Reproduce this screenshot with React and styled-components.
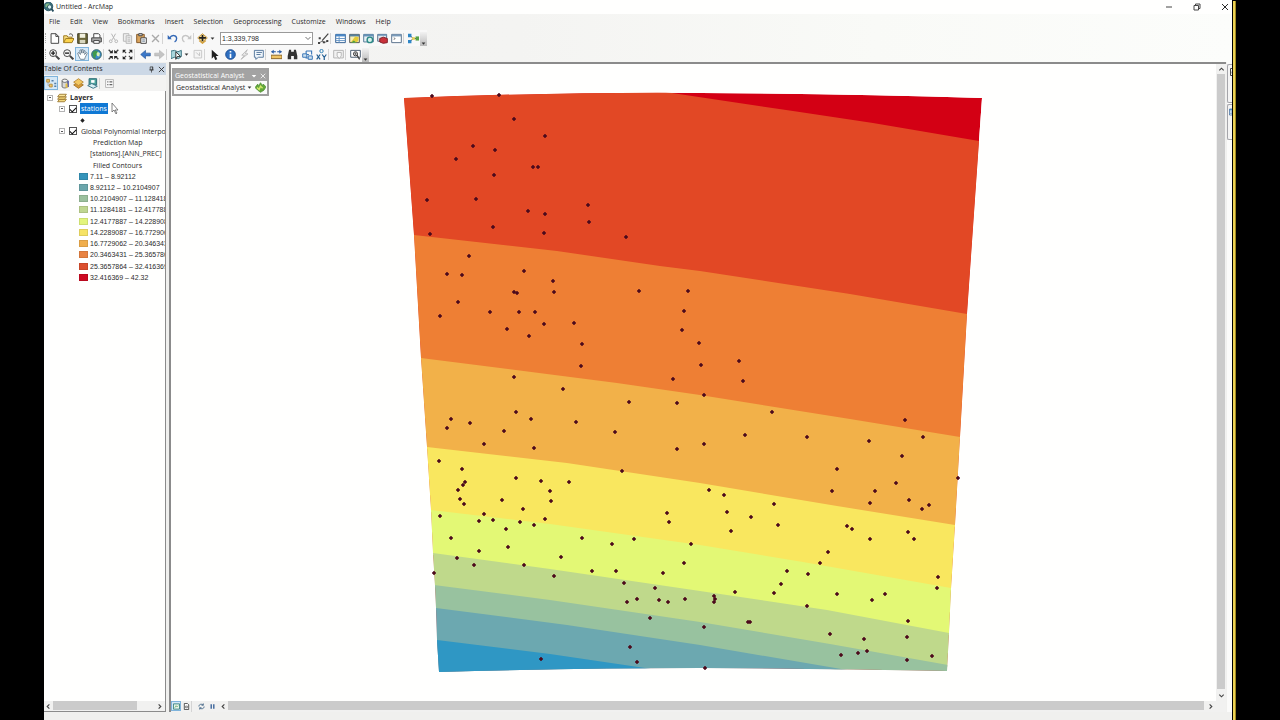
import React from 'react';
import styled, { createGlobalStyle, css } from 'styled-components';

const UI_FONT = '"Open Sans", "Noto Sans", sans-serif';
const NARROW_FONT = '"Liberation Sans", Arial, sans-serif';

const GlobalStyle = createGlobalStyle`
  * { box-sizing: border-box; }
  body { margin: 0; background: #000; font-family: ${UI_FONT}; font-size: 7px; color: #2b2b2b; }
  button, select, input { font: inherit; color: inherit; margin: 0; padding: 0; }
`;

const Screen = styled.div`
  display: flex;
  justify-content: space-between;
  height: 100vh;
  padding: 0 44px;
  background: #000;
  overflow: hidden;
`;

const AppWindow = styled.main`
  display: flex;
  flex: 1;
  flex-direction: column;
  min-width: 0;
  background: #f0f0ee;
`;

const DesktopEdge = styled.div`
  width: 3px;
  margin: 1px 0 0 1px;
  background: #ecd355;
  border-right: 1px solid #a48a22;
`;

const TitleBar = styled.header`
  display: flex;
  align-items: center;
  height: 14px;
  gap: 2px;
  background: #fffffe;
`;

const Title = styled.h1`
  flex: 1;
  margin: 0;
  font-size: 7px;
  font-weight: 400;
  line-height: 14px;
`;

const WindowButtons = styled.div`
  display: flex;
  gap: 16px;
  padding-right: 1px;
`;

const PlainButton = styled.button`
  display: grid;
  place-items: center;
  flex: none;
  width: ${(p) => p.$w || 12}px;
  height: ${(p) => p.$h || 12}px;
  border: 0;
  background: none;
`;

const Bars = styled.div`
  background: linear-gradient(90deg, #f2f2f1 0%, #f4f4f2 40%, #f9faf7 70%, #fcfdfb 100%);
`;

const MenuBar = styled.nav`
  display: flex;
  height: 16px;
  padding-left: 5px;
  gap: 10px;
`;

const MenuItem = styled.button`
  border: 0;
  background: none;
  line-height: 16px;
  white-space: nowrap;
`;

const ToolBar = styled.div`
  display: flex;
  align-items: center;
  width: max-content;
  height: 16px;
  background: #f8f8f8;
`;

const Grip = styled.span`
  width: 1px;
  height: 10px;
  margin: 0 1px;
  border-left: 1px dotted #aaa;
`;

const Separator = styled.span`
  flex: none;
  width: 1px;
  height: 11px;
  margin: 0 ${(p) => p.$gap || 1}px 0 0;
  background: #d4d4d4;
`;

const ToolButton = styled.button`
  display: grid;
  place-items: center;
  flex: none;
  width: ${(p) => p.$w || 14}px;
  height: ${(p) => p.$h || 14}px;
  border: 1px solid transparent;
  background: none;
  ${(p) => p.$active && css`
    border-color: #7fb4dc;
    background: #d5e8f7;
  `}
`;

const Overflow = styled.button`
  align-self: flex-end;
  width: 7px;
  height: 14px;
  border: 0;
  background: linear-gradient(#f2f2f2, #b9b9b9);
  display: grid;
  place-items: end center;
`;

const ScaleBox = styled.span`
  display: flex;
  align-items: center;
  width: 93px;
  height: 13px;
  margin: 0 3px 0 4px;
  border: 1px solid #9a9a9a;
  background: #fff;
`;

const ScaleSelect = styled.select`
  appearance: none;
  flex: 1;
  height: 11px;
  padding-left: 1px;
  border: 0;
  background: none;
  font-family: ${NARROW_FONT};
  line-height: 11px;
`;

const Workspace = styled.div`
  display: grid;
  flex: 1;
  grid-template-columns: 125px minmax(0, 1fr) 5px;
  min-height: 0;
`;

const Contents = styled.aside`
  display: flex;
  flex-direction: column;
  min-width: 0;
  min-height: 0;
  padding: 1px 3px 0 0;
`;

const ContentsHeader = styled.div`
  display: flex;
  align-items: center;
  height: 12px;
  background: #ccd8e6;
`;

const ContentsTitle = styled.h2`
  flex: 1;
  margin: 0;
  font-size: 7px;
  font-weight: 400;
  line-height: 12px;
`;

const ContentsTools = styled.div`
  display: flex;
  align-items: center;
  height: 16px;
  background: #f3f3f2;
`;

const TreePane = styled.div`
  display: flex;
  flex: 1;
  flex-direction: column;
  min-height: 0;
  border: solid #8b8b8b;
  border-width: 0 1px 1px 0;
  background: #fffffe;
`;

const Tree = styled.div`
  display: grid;
  grid-template-rows: repeat(17, minmax(0, 1fr));
  height: 191px;
  margin-top: 1px;
  overflow: hidden;
`;

const TreeRow = styled.div`
  display: flex;
  align-items: center;
  min-width: 0;
  padding-left: ${(p) => p.$indent}px;
  white-space: nowrap;
`;

const TreeGap = styled.div`
  flex: 1;
`;

const Expander = styled.button`
  display: grid;
  place-items: center;
  flex: none;
  width: 6px;
  height: 6px;
  margin-right: 4px;
  border: 1px solid #b4b4b4;
  background: #fff;

  &::after {
    content: '';
    width: 2px;
    height: 1px;
    background: #555;
  }
`;

const LayerLabel = styled.label`
  display: flex;
  align-items: center;
  gap: 3px;
`;

const Check = styled.input`
  appearance: none;
  display: grid;
  place-items: center;
  flex: none;
  width: 8px;
  height: 8px;
  border: 1px solid #555;
  background: #fff;

  &:checked::after {
    content: '';
    width: 5px;
    height: 3px;
    border: solid #111;
    border-width: 0 0 1px 1px;
    transform: rotate(-45deg);
  }
`;

const LayerName = styled.span`
  padding: 0 1px;
  line-height: 11px;
  ${(p) => p.$selected && css`
    background: #0f78d4;
    color: #fff;
  `}
`;

const GroupName = styled.strong`
  margin-left: 3px;
  font-weight: 700;
`;

const LegendText = styled.span`
  font-family: ${NARROW_FONT};
`;

const Swatch = styled.span`
  flex: none;
  width: 9px;
  height: 7px;
  margin-right: 2px;
  border: 1px solid #00000018;
  background: ${(p) => p.$color};
`;

const HScroll = styled.div`
  display: flex;
  flex: ${(p) => (p.$grow ? 1 : 'none')};
  height: 10px;
  background: #f1f1f0;
`;

const HThumb = styled.div`
  width: ${(p) => p.$size};
  height: 9px;
  margin-right: auto;
  background: #cbcbcb;
`;

const MapPane = styled.section`
  display: grid;
  grid-template: minmax(0, 1fr) 11px / minmax(0, 1fr) 10px;
  min-width: 0;
  min-height: 0;
  margin-right: 1px;
  border: solid #8b8b8b;
  border-width: 2px 0 0 2px;
  background: #f1f1f0;
`;

const MapCanvas = styled.div`
  position: relative;
  min-height: 0;
  background: #fffffe;
`;

const MapDrawing = styled.svg`
  display: block;
  width: 100%;
  height: 100%;
`;

const VScroll = styled.div`
  display: flex;
  flex-direction: column;
  align-items: center;
  background: #f1f1f0;
`;

const VThumb = styled.div`
  flex: 1;
  width: 8px;
  background: #cbcbcb;
`;

const MapFooter = styled.div`
  display: flex;
  grid-column: 1 / -1;
  padding-right: 10px;
`;

const FloatingBar = styled.div`
  position: absolute;
  top: 4px;
  left: 1px;
  width: 97px;
  border: 2px solid #9f9f9f;
  background: #fafafa;
`;

const FloatingTitle = styled.div`
  display: flex;
  align-items: center;
  height: 11px;
  padding-left: 1px;
  background: #a3a3a3;
  color: #fff;
`;

const FloatingName = styled.span`
  flex: 1;
  white-space: nowrap;
`;

const FloatingBody = styled.div`
  display: flex;
  align-items: center;
  justify-content: space-between;
  height: 13px;
  padding-left: 2px;
`;

const DropButton = styled.button`
  display: flex;
  align-items: center;
  gap: 2px;
  border: 0;
  background: none;
  white-space: nowrap;
`;

const DockTabs = styled.div`
  display: flex;
  flex-direction: column;
  gap: 1px;
  padding-top: 2px;
  background: #fbfbfa;
`;

const DockTab = styled.button`
  display: flex;
  height: ${(p) => p.$h}px;
  padding: 3px 0 0 1px;
  border: 1px solid #a5a5aa;
  border-right: 0;
  border-radius: 2px 0 0 2px;
  background: #f4f4f4;
  overflow: hidden;

  svg {
    flex: none;
  }
`;

const StatusBar = styled.footer`
  height: 8px;
  background: #f0f0ee;
`;

const Pointer = styled.svg`
  position: absolute;
  top: 102px;
  left: 111px;
`;

const Ic = ({ size = 11, children }) => (
  <svg width={size} height={size} viewBox="0 0 16 16" fill="none" stroke="#444" strokeWidth="1.4" aria-hidden="true">
    {children}
  </svg>
);

const Chevron = ({ dir, size = 7, thin }) => {
  const d = { up: 'M3 10l5-5 5 5', down: 'M3 6l5 5 5-5', left: 'M10 3L5 8l5 5', right: 'M6 3l5 5-5 5' }[dir];
  return <Ic size={size}><path d={d} strokeWidth={thin ? 1.5 : 2.6} /></Ic>;
};

const Caret = () => <Ic size={5}><path d="M2 5h12l-6 7z" fill="#333" stroke="none" /></Ic>;

const icons = {
  new: <><path d="M3 1h7l4 4v10H3z" fill="#fff" /><path d="M10 1v4h4" /></>,
  open: <><path d="M1 14V4h5l1 2h6v3" fill="#f6dc80" stroke="#a07c20" /><path d="M1 14l3-6h12l-3 6z" fill="#fbd24c" stroke="#a07c20" /><path d="M9 2c3-2 5 0 5 3" /></>,
  save: <><path d="M1 1h14v14H1z" fill="#6b6638" stroke="#3c3a22" /><path d="M4 1h8v6H4z" fill="#f1f0de" stroke="none" /><path d="M4 10h8v5H4z" fill="#d8d7c0" stroke="none" /></>,
  print: <><path d="M4 7V1h7l2 2v4" fill="#fff" /><path d="M1 7h14v6H1z" fill="#aaa" /><path d="M4 11h8v4H4z" fill="#fff" /></>,
  cut: <g stroke="#b4b4b4"><path d="M5 1l5 9M11 1L6 10" /><circle cx="4" cy="12" r="2" /><circle cx="12" cy="12" r="2" /></g>,
  copy: <g stroke="#b8b8b8" fill="#eee"><path d="M2 1h8v11H2z" /><path d="M6 4h8v11H6z" /><path d="M8 7h4M8 10h4M8 12h4" /></g>,
  paste: <><path d="M1 2h11v12H1z" fill="#d9a45d" stroke="#86582a" /><path d="M4 1h5v3H4z" fill="#ddd" /><path d="M7 7h8v8H7z" fill="#fff" /><path d="M9 10h4M9 12h4" stroke="#789" /></>,
  remove: <path d="M3 3l10 10M13 3L3 13" stroke="#aaa" strokeWidth="2" />,
  undo: <><path d="M4 7c3-5 10-4 10 1 0 2-1 4-3 5" stroke="#3267b5" strokeWidth="2" /><path d="M1 3v6h6z" fill="#3267b5" stroke="none" /></>,
  redo: <><path d="M12 7C9 2 2 3 2 8c0 2 1 4 3 5" stroke="#c4c4c4" strokeWidth="2" /><path d="M15 3v6H9z" fill="#c4c4c4" stroke="none" /></>,
  addData: <><path d="M1 7l7-6 7 6-7 7z" fill="#f6d98a" stroke="#c79a4a" /><path d="M8 3v9M3 7h10" stroke="#222" strokeWidth="2.4" /><path d="M3 11l5 4 5-4" stroke="#d39a2c" strokeWidth="1.6" /></>,
  editor: <><path d="M6 11L15 1" strokeWidth="1.8" /><path d="M2 14l4-2 3 2 5-2" strokeWidth="1" /><path d="M1 6h3v3H1zM0 13h3v3H0zM7 12h3v3H7zM12 10h3v3h-3z" fill="#444" stroke="none" /></>,
  table: <><path d="M1 2h14v12H1z" fill="#fff" stroke="#315f92" /><path d="M1 2h14v3H1z" fill="#4b88c8" stroke="none" /><path d="M1 8h14M1 11h14M6 5v9" stroke="#6896c6" /></>,
  catalog: <><path d="M1 2h14v12H1z" fill="#f7efb4" stroke="#555" /><path d="M1 2h14v3H1z" fill="#56829f" stroke="none" /><path d="M3 13l3-4 3-4 5 1-1 6-4 2z" fill="#e4cb35" stroke="none" /><path d="M3 14l4-3 4 3z" fill="#4f9d48" stroke="none" /></>,
  search: <><path d="M1 2h14v11H1z" fill="#e6f0f5" stroke="#547b99" /><path d="M1 2h14v3H1z" fill="#6792b7" stroke="none" /><circle cx="10" cy="10" r="4" fill="#d9f2ed" stroke="#2b8885" strokeWidth="2" /></>,
  toolbox: <><path d="M1 2h13v10H1z" fill="#e0e7ee" stroke="#58708a" /><path d="M1 2h13v2H1z" fill="#6792b7" stroke="none" /><path d="M4 8l5-2 6 2v6l-6 1-5-2z" fill="#c9313a" stroke="#801e28" /></>,
  python: <><path d="M1 2h14v12H1z" fill="#fff" stroke="#58708a" /><path d="M1 2h14v3H1z" fill="#7c9cbb" stroke="none" /><path d="M4 7l2 1-2 2" strokeWidth="1" /></>,
  model: <><path d="M3 4l5 4-5 4M8 8h4" stroke="#555" /><path d="M0 1h5v5H0zM0 10h5v5H0z" fill="#2f86c6" stroke="none" /><path d="M6 6h4v4H6z" fill="#e7d35a" stroke="none" /><path d="M11 5h5v6h-5z" fill="#59a347" stroke="none" /></>,
  zoomIn: <><circle cx="6" cy="6" r="5" fill="#f7f7f7" /><path d="M10 10l5 5" strokeWidth="3" /><path d="M6 3v6M3 6h6" stroke="#222" strokeWidth="2" /></>,
  zoomOut: <><circle cx="6" cy="6" r="5" fill="#f7f7f7" /><path d="M10 10l5 5" strokeWidth="3" /><path d="M3 6h6" stroke="#222" strokeWidth="2" /></>,
  pan: <path d="M5 15L2 9 1 6l2-1 2 3-1-6 2-1 1 5V1h2v5l2-4 1 1-1 5 3-3 1 1-3 6-1 3z" fill="#fff" stroke="#5a6e80" strokeWidth="1.1" />,
  globe: <><circle cx="8" cy="8" r="7" fill="#3c8bcf" stroke="#2d5f5c" /><path d="M2 5l4-3 4 1-1 3-2 4-1 4-3-3z" fill="#3f9a4d" stroke="none" /><path d="M10 4l3 2-1 5-3-1-1-3z" fill="#d7f0b4" stroke="none" /></>,
  fixedIn: <><path d="M1 1l4 4M15 1l-4 4M1 15l4-4M15 15l-4-4" strokeWidth="2" /><path d="M2 6h5V1zM14 6H9V1zM2 10h5v5zM14 10H9v5z" fill="#222" stroke="none" /></>,
  fixedOut: <><path d="M2 2l4 4M14 2l-4 4M2 14l4-4M14 14l-4-4" strokeWidth="1.8" /><path d="M1 6V1h5zM15 6V1h-5zM1 10v5h5zM15 10v5h-5z" fill="#222" stroke="none" /></>,
  back: <path d="M1 8l7-6v4h7v4H8v4z" fill="#3a78c9" stroke="#2a5a9d" strokeWidth="1" />,
  forward: <path d="M15 8L8 2v4H1v4h7v4z" fill="#c4c4c4" stroke="#b4b4b4" strokeWidth="1" />,
  selectFeatures: <><path d="M0 3l5-1 5 2 5-2v9l-4 3-6-2-5 2z" fill="#a9d6dc" stroke="#3b7280" /><path d="M7 4l7 7H9l-2 4z" fill="#fff" stroke="#333" /></>,
  clear: <><path d="M3 2h11v11H3z" stroke="#c8c8c8" fill="#f4f4f4" /><path d="M6 5l5 5M11 5v5" stroke="#c4c4c4" /></>,
  pointer: <path d="M4 1v13l3-3 2 5 3-1-2-5h4z" fill="#1f1f1f" stroke="none" />,
  info: <><circle cx="8" cy="8" r="7" fill="#2e6fc0" stroke="#1c4d93" /><path d="M8 7v6M8 3v2" stroke="#fff" strokeWidth="2.4" /></>,
  link: <path d="M12 1L4 9h4l-5 6 10-8H9z" fill="#eee" stroke="#b4b4b4" strokeWidth="1.2" />,
  popup: <><path d="M2 2h13v10H8l-4 3v-3H2z" fill="#eef5fb" stroke="#57799d" /><path d="M5 5h8M5 8h6" stroke="#57799d" /></>,
  measure: <><path d="M0 9h16v5H0z" fill="#efc465" stroke="#8c6728" /><path d="M1 4h14" stroke="#2c5ea6" strokeWidth="1.6" /><path d="M0 4l4-3v6zM16 4l-4-3v6z" fill="#2c5ea6" stroke="none" /><path d="M8 2v4" stroke="#f8f8f8" strokeWidth="2" /></>,
  find: <path d="M3 1h3v3h4V1h3l2 9v5h-5v-5H6v5H1v-5z" fill="#333" stroke="none" />,
  route: <><path d="M2 8h8M6 3h8v5M6 3v10h8" stroke="#3976b7" strokeWidth="1.6" /><path d="M1 7h6v5H1zM9 10h6v5H9z" fill="#cfe2f0" stroke="#3976b7" /></>,
  xy: <><circle cx="8" cy="3" r="2.4" stroke="#2b7eb4" /><path d="M1 8l5 7M6 8l-5 7M9 8l3 4 3-4M12 12v4" stroke="#245f92" strokeWidth="1.8" /></>,
  time: <><path d="M1 2h14v11H1z" stroke="#b5b5b5" fill="#f2f2f2" /><path d="M6 5h6v5l-3 4-3-4z" stroke="#b5b5b5" fill="#fafafa" /></>,
  viewer: <><path d="M1 2h14v10H1z" stroke="#4b5d70" fill="#fff" /><circle cx="8" cy="7" r="3" stroke="#333" /><path d="M10 9l4 6" strokeWidth="2" /><path d="M8 5v4M6 7h4" strokeWidth="1" /></>,
  drawOrder: <><path d="M1 2h4v4H1zM5 9h4v4H5z" fill="#f0c866" stroke="#b68f45" /><path d="M3 6v5h2" stroke="#999" strokeWidth="1" /><path d="M8 4h3M12 8h3M12 12h3" stroke="#557da6" strokeWidth="2" /></>,
  source: <><path d="M3 4v9c2 2 6 2 8 0V4" fill="#d8d8d8" stroke="#6e6e6e" /><ellipse cx="7" cy="4" rx="4" ry="2.4" fill="#f4f4f4" stroke="#6e6e6e" /><path d="M8 8h4v6H8z" fill="#e7c145" stroke="none" /><path d="M12 4v9" stroke="#5b62b5" strokeWidth="2" /></>,
  visibility: <><path d="M1 10l7-4 7 4-7 5z" fill="#d89a35" stroke="#a5782c" /><path d="M1 6l7-5 7 5-7 5z" fill="#f3c861" stroke="#b98c3c" /></>,
  selection: <><path d="M3 1h11v9H3z" fill="#4da39c" stroke="#2b6b77" /><path d="M6 3h5v4H6z" fill="#fff" stroke="none" /><path d="M1 11l6-3 8 4-6 3z" fill="#d7eef2" stroke="#3c7688" /></>,
  options: <><path d="M1 1h14v14H1z" fill="#fafafa" stroke="#aaa" /><path d="M4 5h2M8 5h5M4 10h2M8 10h5" stroke="#666" strokeWidth="2" /></>,
  layers: <><path d="M1 14l3-4h11l-3 4z" fill="#f4d87b" stroke="#97742c" /><path d="M1 10l3-4h11l-3 4z" fill="#f4d87b" stroke="#97742c" /><path d="M1 6l3-4h11l-3 4z" fill="#fae69a" stroke="#97742c" /></>,
  dataView: <><path d="M1 2h14v12H1z" fill="#e9f4e9" stroke="#2d7d79" strokeWidth="2" /><path d="M4 11l3-5 2 3 3-3" stroke="#4a9a55" /></>,
  layoutView: <><path d="M3 1h7l3 3v11H3z" fill="#fff" stroke="#444" strokeWidth="2" /><path d="M6 7h4v4H6z" /></>,
  refresh: <g stroke="#3b6082" strokeWidth="2"><path d="M2 8c0-5 6-7 10-3M14 8c0 5-6 7-10 3" /><path d="M12 1v4H8M4 15v-4h4" /></g>,
  pause: <path d="M5 3v10M11 3v10" stroke="#2f5a94" strokeWidth="3" />,
  analyst: <><path d="M0 8l4-5 1 3 3-5 3 4 1-2 4 4-3 5-5 3-4-3z" fill="#62a83b" stroke="#4d8a30" strokeWidth="1" /><path d="M3 8l3 3 2-5 3 3" stroke="#d4ea6b" strokeWidth="2" /></>,
  close: <path d="M2 2l12 12M14 2L2 14" stroke="currentColor" strokeWidth="2" />,
  pin: <path d="M5 2h6v7H5zM3 9h10M8 9v6M10 2v7" stroke="#333" strokeWidth="1.6" />,
  app: <><circle cx="7" cy="7" r="7" fill="#39717d" stroke="#275261" /><path d="M3 3l4-1 3 2-3 2-1 3-4-2z" fill="#82b785" stroke="none" /><circle cx="9" cy="8" r="3.5" fill="#d4eeee" stroke="#234b5c" /><path d="M12 11l3 4" stroke="#234b5c" strokeWidth="3" /></>,
};

const Tool = ({ name, label, size, ...rest }) => (
  <ToolButton type="button" aria-label={label || name} {...rest}>
    <Ic size={size}>{icons[name]}</Ic>
  </ToolButton>
);

const MENUS = ['File', 'Edit', 'View', 'Bookmarks', 'Insert', 'Selection', 'Geoprocessing', 'Customize', 'Windows', 'Help'];

const LEGEND = [
  ['#3494ba', '7.11 – 8.92112'],
  ['#6ba6ab', '8.92112 – 10.2104907'],
  ['#9bc09d', '10.2104907 – 11.1284181'],
  ['#bfd690', '11.1284181 – 12.4177887'],
  ['#e3f57c', '12.4177887 – 14.2289087'],
  ['#f6e366', '14.2289087 – 16.7729062'],
  ['#f0ae4c', '16.7729062 – 20.3463431'],
  ['#e98342', '20.3463431 – 25.3657864'],
  ['#dc4f2e', '25.3657864 – 32.416369'],
  ['#cd0a22', '32.416369 – 42.32'],
];

const OUTLINE = 'M404 98Q550 92 700 93Q850 94 982 98L979 141 967 314 960 437 955 525 951 589 949 633 947 671Q820 669 700 668Q580 668 439 672L437 640 436 608 435 586 433 553 431 510 427 447 421 358 414 235Z';

// Each contour band fills from its upper edge down; the next band covers its lower part.
const BANDS = [
  ['#e24825', '390,80 660,91 672,93 793,111 873,123 979,141 1000,145'],
  ['#ee7f34', '390,232 414,235 557,251 660,266 700,271 850,294 967,314 1000,320'],
  ['#f2b149', '390,355 421,358 617,383 700,395 850,419 960,437 1000,445'],
  ['#f9e75f', '390,443 427,447 567,463 700,483 837,506 955,525 1000,533'],
  ['#e3f875', '390,506 431,510 550,524 700,545 803,562 951,588 1000,598'],
  ['#bfd98b', '390,548 433,553 550,569 700,591 827,610 949,633 1000,643'],
  ['#98c29f', '390,580 434,585 550,600 700,622 830,644 948,665 1000,675'],
  ['#6ca8b0', '390,603 436,608 567,625 700,645 847,670 1000,698'],
  ['#2f97c4', '390,634 437,640 550,654 645,668 700,678'],
];

const STATIONS = [
  [432, 96], [499, 95], [514, 119], [545, 136], [473, 146], [495, 150], [456, 159], [533, 167], [538, 167], [494, 175],
  [427, 200], [476, 199], [588, 205], [528, 211], [545, 214], [589, 222], [493, 227], [544, 233], [626, 237], [430, 234],
  [469, 256], [447, 274], [462, 275], [524, 271], [553, 281], [514, 292], [517, 293], [554, 292], [458, 302], [440, 316],
  [490, 312], [519, 312], [535, 312], [544, 324], [574, 323], [507, 329], [529, 336], [582, 344], [581, 366], [639, 291],
  [688, 291], [684, 311], [682, 330], [699, 343], [701, 365], [739, 361], [743, 381], [673, 379], [514, 377], [563, 389],
  [629, 402], [677, 403], [516, 412], [531, 419], [451, 419], [447, 428], [470, 423], [504, 431], [576, 422], [615, 432],
  [484, 444], [534, 448], [677, 449], [622, 471], [439, 461], [462, 469], [465, 482], [463, 485], [458, 490], [460, 499],
  [464, 504], [516, 478], [541, 481], [569, 482], [550, 491], [551, 501], [502, 500], [523, 509], [440, 516], [484, 514],
  [479, 521], [493, 520], [520, 522], [534, 525], [545, 519], [506, 529], [451, 538], [508, 547], [479, 551], [457, 558],
  [474, 565], [524, 565], [554, 576], [561, 557], [582, 538], [612, 544], [634, 539], [592, 571], [616, 571], [434, 573],
  [667, 513], [669, 522], [691, 544], [684, 563], [663, 573], [624, 583], [655, 588], [627, 602], [637, 599], [659, 600],
  [668, 602], [685, 599], [650, 618], [630, 647], [637, 662], [541, 659], [704, 395], [772, 412], [745, 435], [704, 444],
  [807, 437], [869, 441], [905, 420], [923, 437], [902, 456], [837, 469], [958, 478], [896, 483], [832, 491], [875, 491],
  [870, 503], [909, 500], [929, 505], [922, 509], [709, 490], [724, 495], [727, 512], [751, 517], [731, 531], [774, 504],
  [778, 525], [847, 526], [852, 529], [870, 539], [908, 532], [914, 539], [828, 552], [820, 563], [787, 571], [808, 574],
  [781, 584], [774, 593], [807, 606], [735, 592], [714, 596], [715, 599], [714, 602], [748, 622], [750, 622], [704, 627],
  [837, 594], [872, 600], [885, 594], [938, 577], [937, 588], [908, 621], [907, 637], [830, 634], [864, 639], [867, 651],
  [858, 653], [841, 655], [907, 660], [932, 656], [705, 668],
];

const MapView = () => (
  <MapDrawing viewBox="171 64 1045 637" role="img" aria-label="Prediction map with stations">
    <defs><clipPath id="extent"><path d={OUTLINE} shapeRendering="crispEdges" /></clipPath></defs>
    <g clipPath="url(#extent)">
      <path d={OUTLINE} fill="#d30014" />
      {BANDS.map(([color, edge], i) => {
        const below = BANDS[i + 1];
        const close = below && i < 7 ? below[1].split(' ').reverse().map((p) => {
          const [x, y] = p.split(',').map(Number);
          return `${x},${y + 2}`;
        }).join(' ') : '1000,700 390,700';
        return <polygon key={color} fill={color} points={`${edge} ${close}`} />;
      })}
    </g>
    {STATIONS.map(([x, y], i) => (
      <path key={i} d={`M${x - 2} ${y}l2-2 2 2-2 2z`} fill="#4c0a1c" stroke="#4c0a1c" strokeWidth="0.5" />
    ))}
  </MapDrawing>
);

export default function App() {
  return (
    <Screen>
      <GlobalStyle />
      <AppWindow>
        <TitleBar>
          <Ic size={10}>{icons.app}</Ic>
          <Title>Untitled - ArcMap</Title>
          <WindowButtons>
            <PlainButton type="button" aria-label="Minimize"><Ic size={8}><path d="M2 8h12" strokeWidth="2" /></Ic></PlainButton>
            <PlainButton type="button" aria-label="Restore"><Ic size={8}><path d="M2 5h9v9H2zM5 5V2h9v9h-3" strokeWidth="2" /></Ic></PlainButton>
            <PlainButton type="button" aria-label="Close"><Ic size={8}>{icons.close}</Ic></PlainButton>
          </WindowButtons>
        </TitleBar>

        <Bars>
          <MenuBar>{MENUS.map((m) => <MenuItem type="button" key={m}>{m}</MenuItem>)}</MenuBar>
          <ToolBar>
            <Grip />
            <Tool name="new" /><Tool name="open" /><Tool name="save" /><Tool name="print" />
            <Separator $gap={2} />
            <Tool name="cut" /><Tool name="copy" /><Tool name="paste" /><Tool name="remove" />
            <Separator $gap={2} />
            <Tool name="undo" /><Tool name="redo" />
            <Separator $gap={1} />
            <Tool name="addData" label="Add data" />
            <PlainButton type="button" aria-label="Add data options" $w={7}><Caret /></PlainButton>
            <ScaleBox>
              <ScaleSelect aria-label="Map scale"><option>1:3,339,798</option></ScaleSelect>
              <Chevron dir="down" size={8} thin />
            </ScaleBox>
            <Tool name="editor" />
            <Separator $gap={2} />
            <Tool name="table" /><Tool name="catalog" /><Tool name="search" /><Tool name="toolbox" /><Tool name="python" />
            <Separator $gap={2} />
            <Tool name="model" />
            <Overflow type="button" aria-label="Standard toolbar options"><Caret /></Overflow>
          </ToolBar>
          <ToolBar>
            <Grip />
            <Tool name="zoomIn" label="Zoom in" /><Tool name="zoomOut" label="Zoom out" /><Tool name="pan" $active /><Tool name="globe" label="Full extent" />
            <Separator $gap={2} />
            <Tool name="fixedIn" label="Fixed zoom in" /><Tool name="fixedOut" label="Fixed zoom out" />
            <Separator $gap={3} />
            <Tool name="back" /><Tool name="forward" />
            <Separator $gap={2} />
            <Tool name="selectFeatures" label="Select features" />
            <PlainButton type="button" aria-label="Select options" $w={7}><Caret /></PlainButton>
            <Tool name="clear" label="Clear selection" />
            <Separator $gap={1} />
            <Tool name="pointer" label="Select elements" $w={17} />
            <Tool name="info" label="Identify" /><Tool name="link" label="Hyperlink" /><Tool name="popup" label="HTML popup" />
            <Separator $gap={2} />
            <Tool name="measure" $w={16} /><Tool name="find" $w={16} /><Tool name="route" /><Tool name="xy" label="Go to XY" />
            <Separator $gap={2} />
            <Tool name="time" />
            <Separator $gap={2} />
            <Tool name="viewer" />
            <Overflow type="button" aria-label="Tools toolbar options"><Caret /></Overflow>
          </ToolBar>
        </Bars>

        <Workspace>
          <Contents>
            <ContentsHeader>
              <ContentsTitle>Table Of Contents</ContentsTitle>
              <PlainButton type="button" aria-label="Auto hide" $w={10}><Ic size={7}>{icons.pin}</Ic></PlainButton>
              <PlainButton type="button" aria-label="Close contents" $w={10}><Ic size={7}>{icons.close}</Ic></PlainButton>
            </ContentsHeader>
            <ContentsTools>
              <Tool name="drawOrder" label="List by drawing order" $active />
              <Tool name="source" label="List by source" />
              <Tool name="visibility" label="List by visibility" $w={13} />
              <Tool name="selection" label="List by selection" />
              <Separator $gap={2} />
              <Tool name="options" size={9} />
            </ContentsTools>
            <TreePane>
              <Tree>
                <TreeRow $indent={3}><Expander aria-label="Collapse Layers" /><Ic size={10}>{icons.layers}</Ic><GroupName>Layers</GroupName></TreeRow>
                <TreeRow $indent={15}>
                  <Expander aria-label="Collapse stations" />
                  <LayerLabel><Check type="checkbox" defaultChecked /><LayerName $selected>stations</LayerName></LayerLabel>
                </TreeRow>
                <TreeRow $indent={36}><Ic size={5}><path d="M8 1l7 7-7 7-7-7z" fill="#222" stroke="none" /></Ic></TreeRow>
                <TreeRow $indent={15}>
                  <Expander aria-label="Collapse Global Polynomial Interpolation" />
                  <LayerLabel><Check type="checkbox" defaultChecked /><LayerName>Global Polynomial Interpolation</LayerName></LayerLabel>
                </TreeRow>
                <TreeRow $indent={49}>Prediction Map</TreeRow>
                <TreeRow $indent={46}>[stations].[ANN_PREC]</TreeRow>
                <TreeRow $indent={49}>Filled Contours</TreeRow>
                {LEGEND.map(([color, text]) => (
                  <TreeRow key={text} $indent={35}><Swatch $color={color} /><LegendText>{text}</LegendText></TreeRow>
                ))}
              </Tree>
              <TreeGap />
              <HScroll>
                <PlainButton type="button" aria-label="Scroll contents left" $w={9} $h={10}><Chevron dir="left" /></PlainButton>
                <HThumb $size="84px" />
                <PlainButton type="button" aria-label="Scroll contents right" $w={12} $h={10}><Chevron dir="right" /></PlainButton>
              </HScroll>
            </TreePane>
          </Contents>

          <MapPane>
            <MapCanvas>
              <MapView />
              <FloatingBar>
                <FloatingTitle>
                  <FloatingName>Geostatistical Analyst</FloatingName>
                  <PlainButton type="button" aria-label="Toolbar options" $w={9} $h={10}><Ic size={6}><path d="M2 5h12l-6 7z" fill="#fff" stroke="none" /></Ic></PlainButton>
                  <PlainButton type="button" aria-label="Close toolbar" $w={9} $h={10}><Ic size={6}>{icons.close}</Ic></PlainButton>
                </FloatingTitle>
                <FloatingBody>
                  <DropButton type="button">Geostatistical Analyst<Caret /></DropButton>
                  <Tool name="analyst" label="Geostatistical wizard" $w={13} />
                </FloatingBody>
              </FloatingBar>
            </MapCanvas>
            <VScroll>
              <PlainButton type="button" aria-label="Scroll up" $w={10} $h={10}><Chevron dir="up" /></PlainButton>
              <VThumb />
              <PlainButton type="button" aria-label="Scroll down" $w={10}><Chevron dir="down" /></PlainButton>
            </VScroll>
            <MapFooter>
              <Tool name="dataView" label="Data view" size={7} $w={10} $h={10} $active />
              <Tool name="layoutView" label="Layout view" size={7} $w={10} $h={10} />
              <Separator $gap={4} />
              <Tool name="refresh" size={7} $w={10} $h={10} />
              <Tool name="pause" size={7} $w={12} $h={10} />
              <HScroll $grow>
                <PlainButton type="button" aria-label="Scroll left" $w={10} $h={10}><Chevron dir="left" /></PlainButton>
                <HThumb $size="100%" />
                <PlainButton type="button" aria-label="Scroll right" $w={12} $h={10}><Chevron dir="right" /></PlainButton>
              </HScroll>
            </MapFooter>
          </MapPane>

          <DockTabs>
            <DockTab type="button" aria-label="Catalog" $h={39}><Ic size={8}>{icons.layoutView}</Ic></DockTab>
            <DockTab type="button" aria-label="Search" $h={36}><Ic size={8}>{icons.table}</Ic></DockTab>
          </DockTabs>
        </Workspace>
        <StatusBar />
      </AppWindow>
      <DesktopEdge />
      <Pointer width="8" height="13" viewBox="0 0 8 13"><path d="M1 1v9l2-2 2 4 1-1-2-3h3z" fill="#fff" stroke="#666" strokeWidth="0.8" /></Pointer>
    </Screen>
  );
}
